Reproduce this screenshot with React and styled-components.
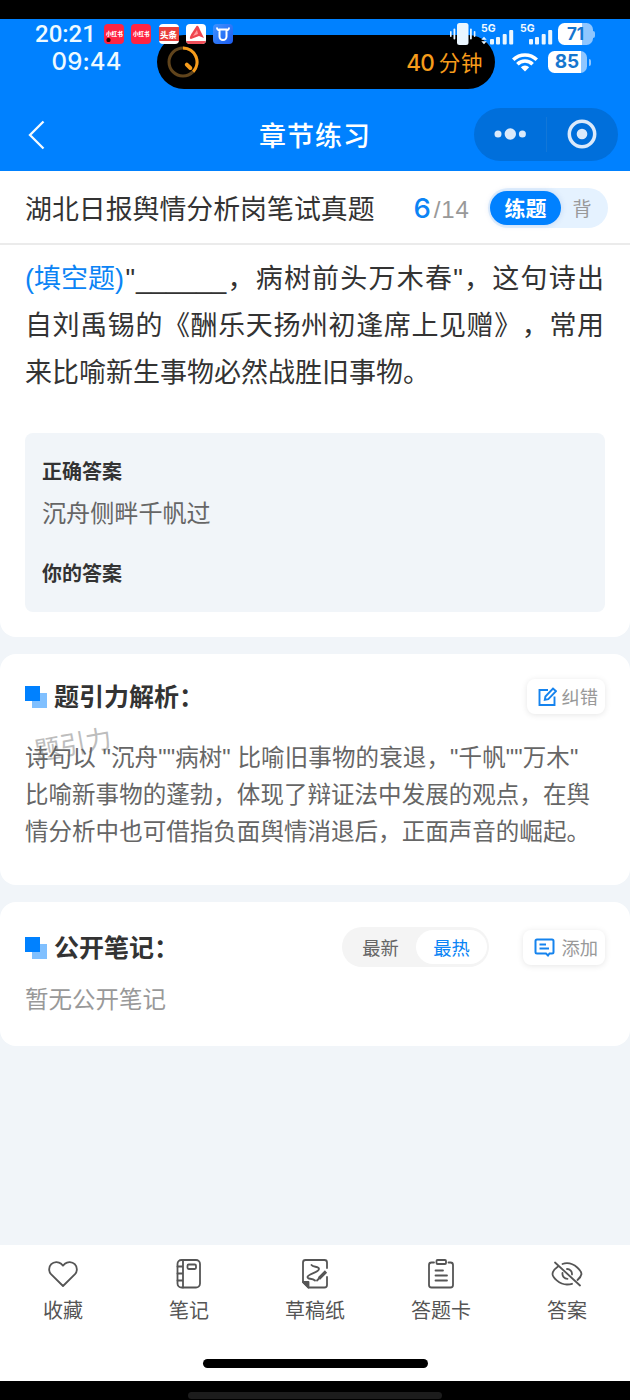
import React from "react";
import styled, { createGlobalStyle } from "styled-components";

const Global = createGlobalStyle`
  * { box-sizing: border-box; }
  body { margin: 0; background: #000; }
`;
const Screen = styled.div`
  width: 630px; height: 1400px; display: flex; flex-direction: column;
  background: #f1f5f9; overflow: hidden; position: relative; white-space: nowrap;
  font-family: "Noto Sans CJK SC", sans-serif; color: #333; text-spacing-trim: space-all;
`;
const TopBezel = styled.div`height: 19px; background: #000; flex: none;`;
const Header = styled.header`
  height: 152px; flex: none; background: #0081ff; position: relative;
  display: flex; flex-direction: column; justify-content: flex-end;
`;
const NavBar = styled.div`
  height: 73px; display: grid; grid-template-columns: 156px 1fr 156px; align-items: center;
`;
const Back = styled.svg`margin-left: 27px; display: block;`;
const PageTitle = styled.h1`
  margin: 0; text-align: center; color: #fff; font-size: 27px; font-weight: 500; letter-spacing: 1px;
  line-height: 40px; padding-top: 1px;
`;
const Capsule = styled.div`
  width: 144px; height: 53px; border-radius: 27px; background: #006fdb; display: flex; align-items: center;
`;
const CapsulePart = styled.div`
  flex: 1; height: 35px; display: flex; align-items: center; justify-content: center; padding-bottom: 1px;
  border-left: ${p => (p.$divided ? "1px solid #1277d8" : "0")};
`;
const Island = styled.div`
  position: absolute; left: 157px; top: 16px; width: 338px; height: 54px; border-radius: 27px;
  background: #000; display: flex; align-items: center; justify-content: space-between; padding: 0 12px 0 10px;
`;
const IslandText = styled.span`
  color: #f79c1b; font-size: 21.5px; letter-spacing: 0.6px; line-height: 30px; display: flex; align-items: baseline; gap: 5px;
  b { font: 500 22.5px Inter, sans-serif; letter-spacing: -0.9px; }
`;
const StatusRow = styled.div`
  position: absolute; left: 0; right: 0; top: ${p => p.$top}px; height: 24px;
  display: flex; align-items: center; padding: 0 ${p => p.$right}px 0 ${p => p.$left}px;
`;
const Clock = styled.span`
  font-family: ${p => p.$font}, sans-serif; font-size: ${p => p.$size}px; font-weight: ${p => p.$weight};
  letter-spacing: ${p => p.$track || 0}px; color: #eefaff; width: ${p => p.$width}px; line-height: 24px;
`;
const AppIcons = styled.div`display: flex; gap: 7.3px; flex: 1;`;
const AppIcon = styled.div`
  width: 20px; height: 20px; border-radius: 4px; background: ${p => p.$bg}; overflow: hidden;
  color: #fff; font-size: ${p => p.$size || 6}px; font-weight: 900; line-height: 20px;
  display: flex; align-items: center; justify-content: center;
`;
const Headline = styled.span`
  background: #e9403c; width: 20px; height: 14px; line-height: 14px; text-align: center; font-size: 8.5px;
`;
const StatusIcons = styled.div`display: flex; align-items: center;`;
const Battery = styled.div`
  width: ${p => p.$width}px; height: 22px; border-radius: 6.5px; position: relative; margin-left: ${p => p.$gap}px;
  background: linear-gradient(to right, #fff ${p => p.$level}%, #8fc6ff ${p => p.$level}%);
  color: #1576cf; font: 700 ${p => p.$size}px/22px Inter, sans-serif; text-align: center;
  &::after { content: ""; position: absolute; right: ${p => p.$cap}px; top: 7.5px; width: 2px; height: 7px;
    background: #8fc6ff; border-radius: 0 2px 2px 0; }
`;

const TitleRow = styled.div`
  height: 74px; flex: none; background: #fff; border-bottom: 2px solid #ebebeb;
  display: flex; align-items: center; padding: 1px 22px 0 25px;
`;
const PaperTitle = styled.div`font-size: 26.9px; line-height: 40px; width: 388.5px; color: #333; padding-top: 1px;`;
const Progress = styled.div`
  font-family: "Liberation Sans", sans-serif; font-size: 24px; color: #999; width: 74.5px; letter-spacing: 0.8px;
  display: flex; align-items: baseline;
  strong { font: 500 27.5px Inter, sans-serif; color: #0b84f5; letter-spacing: 0; margin-right: 3px; }
`;
const Mode = styled.div`
  width: 120px; height: 40px; border-radius: 20px; background: #e5f2ff; display: flex; align-items: center; padding-left: 2px;
`;
const ModeItem = styled.div`
  width: ${p => (p.$on ? 71 : 42)}px; height: 34px; border-radius: 17px; line-height: 33px; text-align: center;
  background: ${p => (p.$on ? "#0081ff" : "transparent")}; color: ${p => (p.$on ? "#fff" : "#999")};
  font-size: ${p => (p.$on ? 21 : 19)}px; font-weight: ${p => (p.$on ? 700 : 400)};
  box-shadow: ${p => (p.$on ? "0 0 6px rgba(0,80,180,.16)" : "none")};
`;
const QuestionCard = styled.section`
  height: 392px; flex: none; background: #fff; border-radius: 0 0 16px 16px; padding: 8px 25px 0;
`;
const QuestionLine = styled.div`
  font-size: 27px; line-height: 47px; height: 47px; width: 579px; color: #333;
  text-align: justify; text-align-last: ${p => (p.$last ? "left" : "justify")};
`;
const Run = styled.span`
  display: inline-block; line-height: 40px; text-align-last: left; padding: 0 ${p => p.$after || 0}px 0 ${p => p.$before || 0}px;
  font-family: "Liberation Sans", "Noto Sans CJK SC", sans-serif; color: ${p => (p.$accent ? "#0b84f5" : "inherit")};
`;
const AnswerBox = styled.div`
  margin-top: 39px; height: 179px; border-radius: 8px; background: #f1f5f9; padding: 23px 17px;
`;
const AnswerLabel = styled.div`font-size: 20px; font-weight: 700; line-height: 30px; color: #333;`;
const AnswerText = styled.div`font-size: 24.1px; line-height: 36px; margin: 8px 0 28px; color: #666;`;

const Card = styled.section`
  height: ${p => p.$height}px; flex: none; background: #fff; border-radius: 16px; margin-top: 17px;
  padding: ${p => p.$top}px 25px 0;
`;
const CardHead = styled.div`display: flex; align-items: center; height: 40px;`;
const Squares = styled.svg`display: block; margin: 1px 7px 0 0; flex: none;`;
const CardTitle = styled.h2`
  margin: 0; font-size: 25px; font-weight: 700; line-height: 36px; flex: 1; color: #333; padding-bottom: 2px;
`;
const ActionButton = styled.div`
  height: 35px; width: ${p => p.$width}px; border-radius: 8px; background: #fff; box-shadow: 0 1px 6px rgba(0,0,0,.1);
  display: flex; align-items: center; justify-content: flex-end; gap: ${p => p.$inner}px; padding-right: 7px;
  font-size: 18.3px; color: #999; line-height: 34px; margin-left: ${p => p.$gap || 0}px;
`;
const Analysis = styled.div`
  position: relative; isolation: isolate; margin-top: 24px; color: #666; font-size: 23.5px;
  font-family: "Liberation Sans", "Noto Sans CJK SC", sans-serif;
`;
const AnalysisLine = styled.div`line-height: 37px; height: 37px; letter-spacing: ${p => p.$track || 0}px;`;
const Watermark = styled.div`
  position: absolute; z-index: -1; left: 9px; top: -13px; font-size: 26px; line-height: 36px; color: #bdbdbd;
  transform: rotate(-10deg);
`;
const Sort = styled.div`
  width: 147px; height: 40px; border-radius: 20px; background: #f4f4f4; display: flex; align-items: center;
  padding: 0 2px 0 3px;
`;
const SortItem = styled.div`
  width: 71px; height: 34px; border-radius: 17px; text-align: center; line-height: 34px; font-size: 18.3px;
  background: ${p => (p.$on ? "#fff" : "transparent")}; color: ${p => (p.$on ? "#0b84f5" : "#666")};
`;
const Empty = styled.div`color: #999; font-size: 23.5px; line-height: 36px; margin-top: 13px;`;
const Spacer = styled.div`flex: 1;`;
const TabBar = styled.nav`
  height: 136px; flex: none; background: #fff; display: flex; flex-direction: column; justify-content: space-between;
  align-items: center; padding-bottom: 13px;
`;
const Tabs = styled.div`display: grid; grid-template-columns: repeat(5, 126px); padding-top: 12px;`;
const Tab = styled.div`
  display: flex; flex-direction: column; align-items: center; font-size: 20px; line-height: 30px; color: #555; gap: 4px;
  svg { display: block; }
`;
const HomeBar = styled.div`width: 225px; height: 9px; border-radius: 5px; background: #000;`;
const BottomBezel = styled.div`
  height: 19px; flex: none; background: #000; display: flex; justify-content: center; align-items: flex-end; padding-bottom: 1px;
`;
const FaintBar = styled.div`width: 254px; height: 7px; border-radius: 4px; background: #1c1c1c;`;
const SignalSvg = styled.svg`margin-left: ${p => p.$gap}px;`;

const BlueSquares = () => (
  <Squares width="22" height="22">
    <rect x="7" y="7" width="15" height="15" fill="#80c0ff" />
    <rect width="15" height="15" fill="#0081ff" />
  </Squares>
);
const Signal = ({ data, gap }) => (
  <SignalSvg width="33" height="24" $gap={gap}>
    <text x="0" y="9.5" fontFamily="Inter" fontWeight="700" fontSize="10.5" fill="#f2faff">5G</text>
    {data && <path d="M3 14.8L.3 17.7H5.7ZM3 22.2L.3 19.3H5.7Z" fill="#eaf6ff" />}
    <g fill="#eaf6ff">
      <rect x="9" y="17" width="4" height="5.5" rx="1" />
      <rect x="15" y="15" width="4" height="7.5" rx="1" />
      <rect x="21.7" y="12" width="4" height="10.5" rx="1" />
      <rect x="28.2" y="8" width="4" height="14.5" rx="1" />
    </g>
  </SignalSvg>
);
const Icon = ({ children }) => (
  <svg width="32" height="34" viewBox="0 0 32 34" fill="none" stroke="#555" strokeWidth="1.8" strokeLinecap="round" strokeLinejoin="round">{children}</svg>
);

export default function App() {
  return (
    <Screen>
      <Global />
      <TopBezel />
      <Header>
        <Island>
          <svg width="32" height="32" fill="none" strokeWidth="3">
            <circle cx="16" cy="16" r="14" stroke="#60441c" />
            <path d="M16 2A14 14 0 0 1 26.2 25.6" stroke="#f79c1b" />
            <path d="M19.8 18.6L23.3 22" stroke="#f79c1b" strokeWidth="4" strokeLinecap="round" />
          </svg>
          <IslandText><b>40</b>分钟</IslandText>
        </Island>
        <StatusRow $top={3} $left={35} $right={37}>
          <Clock $font="Roboto" $size={24} $weight={500} $width={69}>20:21</Clock>
          <AppIcons>
            <AppIcon $bg="#ff2442">
              <svg width="20" height="20"><text x="2" y="12" fontSize="5.6" fontWeight="900" fill="#fff">小红书</text><rect x="2.5" y="14" width="4" height="4" rx="1.5" fill="#300" /></svg>
            </AppIcon>
            <AppIcon $bg="#ff2442" $size={5.5}>小红书</AppIcon>
            <AppIcon $bg="#fff"><Headline>头条</Headline></AppIcon>
            <AppIcon $bg="#fff">
              <svg width="20" height="20"><path d="M10.5 2C12 1 13 3 14 6L18 14L13 12L5 15C3 15 4 12 6 9Z" fill="#f0444e" /><path d="M11 6L7 12L12 10Z" fill="#ff9b9c" /><rect y="17" width="20" height="3" fill="#f0505a" /></svg>
            </AppIcon>
            <AppIcon $bg="linear-gradient(135deg,#3f93ff,#1c5cf0)">
              <svg width="20" height="20" fill="none" stroke="#fff" strokeWidth="2"><path d="M4 3.5C4 6 5 6.2 7 6.2M16 3.5C16 6 15 6.2 13 6.2M6.5 5.5H13.500V12.500A3.500 3.500 0 0 1 6.500 12.500Z" /></svg>
            </AppIcon>
          </AppIcons>
          <StatusIcons>
            <svg width="26" height="24" fill="#eaf6ff">
              <rect x="7" y="1" width="11.5" height="22" rx="2.5" />
              <rect x="0" y="9" width="1.6" height="6" rx=".8" /><rect x="3.5" y="6.5" width="1.8" height="11" rx=".9" />
              <rect x="20" y="6.5" width="1.8" height="11" rx=".9" /><rect x="23.8" y="9" width="1.6" height="6" rx=".8" />
            </svg>
            <Signal data gap={5} />
            <Signal gap={5.5} />
            <Battery $width={35} $gap={5.5} $level={69} $size={17} $cap={-2}>71</Battery>
          </StatusIcons>
        </StatusRow>
        <StatusRow $top={31} $left={51.5} $right={43.5}>
          <Clock $font="Inter" $size={24} $weight={500} $width={100} $track={0.15}>09:44</Clock>
          <Spacer />
          <StatusIcons>
            <svg width="26" height="20" fill="none" stroke="#fff" strokeWidth="3.6">
              <path d="M1.2 7.8A16.8 16.8 0 0 1 24.8 7.8M5.4 12.2A10.8 10.8 0 0 1 20.6 12.2" />
              <path d="M13 19.5L8.8 15.2A6 6 0 0 1 17.2 15.2Z" fill="#fff" stroke="none" />
            </svg>
            <Battery $width={39} $gap={9.5} $level={84} $size={19} $cap={-4}>85</Battery>
          </StatusIcons>
        </StatusRow>
        <NavBar>
          <Back width="18" height="30" fill="none" stroke="#f4faff" strokeWidth="2.3"><path d="M16.5 1.5L3 15L16.5 28.5" /></Back>
          <PageTitle>章节练习</PageTitle>
          <Capsule>
            <CapsulePart>
              <svg width="34" height="14" fill="#dbeafb"><circle cx="5" cy="7" r="3.5" /><circle cx="17.3" cy="7" r="5.7" /><circle cx="29.4" cy="7" r="3.5" /></svg>
            </CapsulePart>
            <CapsulePart $divided>
              <svg width="30" height="30"><circle cx="15" cy="15" r="12.7" fill="none" stroke="#dbeafb" strokeWidth="3.5" /><circle cx="15" cy="15" r="5.3" fill="#dbeafb" /></svg>
            </CapsulePart>
          </Capsule>
        </NavBar>
      </Header>

      <TitleRow>
        <PaperTitle>湖北日报舆情分析岗笔试真题</PaperTitle>
        <Progress><strong>6</strong>/14</Progress>
        <Mode><ModeItem $on>练题</ModeItem><ModeItem>背</ModeItem></Mode>
      </TitleRow>
      <QuestionCard>
        <QuestionLine><Run $accent>(填空题)</Run><Run $before={1.5}>"</Run><Run $before={1}>______</Run>，病树前头万木春<Run>"</Run>，这句诗出</QuestionLine>
        <QuestionLine>自刘禹锡的《酬乐天扬州初逢席上见赠》，常用</QuestionLine>
        <QuestionLine $last>来比喻新生事物必然战胜旧事物。</QuestionLine>
        <AnswerBox>
          <AnswerLabel>正确答案</AnswerLabel>
          <AnswerText>沉舟侧畔千帆过</AnswerText>
          <AnswerLabel>你的答案</AnswerLabel>
        </AnswerBox>
      </QuestionCard>

      <Card $height={231} $top={22}>
        <CardHead>
          <BlueSquares />
          <CardTitle>题引力解析：</CardTitle>
          <ActionButton $width={78} $inner={4}>
            <svg width="19" height="19" fill="none" stroke="#1583ee" strokeWidth="1.9">
              <path d="M10 3H1.5V18H16.5V9.5" /><path d="M6.8 12.8L7.4 9.5L15 1.5L18 4.2L10.3 12.2Z" />
            </svg>
            纠错
          </ActionButton>
        </CardHead>
        <Analysis>
          <Watermark>题引力</Watermark>
          <AnalysisLine $track={0.12}>诗句以 "沉舟""病树" 比喻旧事物的衰退，"千帆""万木"</AnalysisLine>
          <AnalysisLine $track={0.04}>比喻新事物的蓬勃，体现了辩证法中发展的观点，在舆</AnalysisLine>
          <AnalysisLine $track={0.04}>情分析中也可借指负面舆情消退后，正面声音的崛起。</AnalysisLine>
        </Analysis>
      </Card>

      <Card $height={144} $top={25}>
        <CardHead>
          <BlueSquares />
          <CardTitle>公开笔记：</CardTitle>
          <Sort><SortItem>最新</SortItem><SortItem $on>最热</SortItem></Sort>
          <ActionButton $width={82} $gap={34} $inner={6}>
            <svg width="21" height="19" fill="none" stroke="#1583ee" strokeWidth="2">
              <path d="M3 1.5H18Q19.5 1.5 19.5 3V14Q19.5 15.5 18 15.5H15.5L14 17.5L12 15.5H3Q1.5 15.5 1.5 14V3Q1.5 1.5 3 1.5ZM5.5 6.5H12M5.5 10.5H15" />
            </svg>
            添加
          </ActionButton>
        </CardHead>
        <Empty>暂无公开笔记</Empty>
      </Card>
      <Spacer />

      <TabBar>
        <Tabs>
          <Tab><Icon><path d="M16 29L4 17.2A7.3 7.3 0 0 1 14.2 6.8L16 8.7L17.8 6.8A7.3 7.3 0 0 1 28 17.2Z" /></Icon>收藏</Tab>
          <Tab><Icon><rect x="4.5" y="3" width="22.5" height="27.5" rx="4" /><path d="M10 3V30.5M4.5 9.5H10M4.5 16.5H10M4.5 23.5H10" /><rect x="14.5" y="7.5" width="8.5" height="4.5" rx="1.2" /></Icon>笔记</Tab>
          <Tab><Icon><path d="M28 11V5.5Q28 3 25.5 3H6.5Q4 3 4 5.5V25L9.5 30.5H25.5Q28 30.5 28 28V20" /><path d="M4 25H9.5V30.5Z" fill="#555" /><path d="M12.5 8C14 10.5 20 9 20 12C20 15.5 9 16.5 8.5 20C8.5 23 13 20.5 16 23.5" /><path d="M20 21.5L27 14.5" strokeWidth="3.2" strokeLinecap="butt" /><path d="M18 23.5L20 21.5" /></Icon>草稿纸</Tab>
          <Tab><Icon><path d="M9 5.5H6.5Q4 5.5 4 8V28Q4 30.5 6.5 30.5H25.5Q28 30.5 28 28V8Q28 5.5 25.5 5.5H23.5" /><rect x="11.5" y="3" width="9.5" height="4" rx="1" /><path d="M10.5 13.5H18M10.5 18.5H22M10.5 23.5H22" /></Icon>答题卡</Tab>
          <Tab><Icon><path d="M7 9.5C3.5 12 1.5 15 1.5 17C1.5 20 8 27.5 16 27.5Q19 27.5 21 26.8M11.5 7Q13.5 6.2 16 6.2C24 6.2 30.5 14 30.5 17Q30 20 26.5 23M4 5.5L29 28.5M11.5 16A5 5 0 0 0 16.5 21.8M16 12A5 5 0 0 1 21 17.5" /></Icon>答案</Tab>
        </Tabs>
        <HomeBar />
      </TabBar>
      <BottomBezel><FaintBar /></BottomBezel>
    </Screen>
  );
}
